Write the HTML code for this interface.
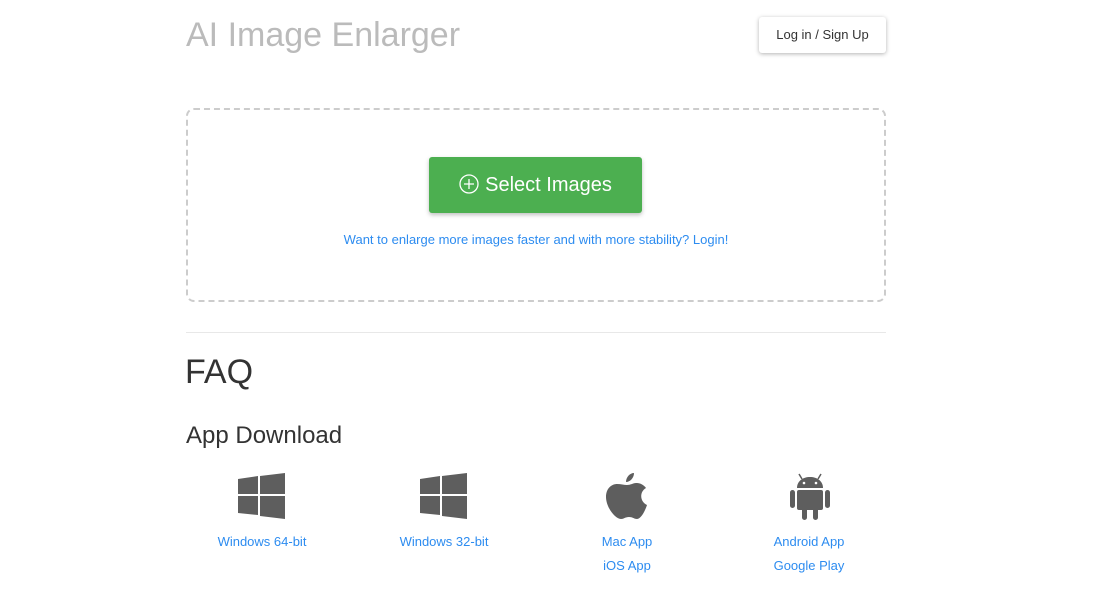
<!DOCTYPE html>
<html><head><style>
body{margin:0;background:#fff;font-family:"Liberation Sans",sans-serif;width:1101px;height:589px;overflow:hidden;position:relative}
.a{position:absolute}
.lnk{color:#2d8cf0;font-size:13px;text-align:center;width:180px;line-height:24px}
</style></head><body>
<div class="a" style="left:186px;top:16px;font-size:34px;color:#bbb;">AI Image Enlarger</div>
<div class="a" style="left:759px;top:17px;width:127px;height:36px;box-shadow:0 1px 4px rgba(0,0,0,.3);border-radius:3px;font-size:13px;color:#333;line-height:36px;text-align:center">Log in / Sign Up</div>
<div class="a" style="left:186px;top:108px;width:696px;height:190px;border:2px dashed #ccc;border-radius:8px"></div>
<div class="a" style="left:429px;top:157px;width:213px;height:56px;background:#4caf50;border-radius:3px;box-shadow:0 2px 4px rgba(0,0,0,.25);color:#fff;font-size:20px;line-height:56px;text-align:center">
<svg width="20" height="20" viewBox="0 0 20 20" style="vertical-align:-3px;margin-right:6px"><circle cx="10" cy="10" r="9" fill="none" stroke="#fff" stroke-width="1.3"/><path d="M10 5v10M5 10h10" stroke="#fff" stroke-width="1.3"/></svg>Select Images</div>
<div class="a lnk" style="left:186px;top:228px;width:700px">Want to enlarge more images faster and with more stability? Login!</div>
<div class="a" style="left:186px;top:332px;width:700px;height:1px;background:#e8e8e8"></div>
<div class="a" style="left:185px;top:353px;font-size:34px;color:#333">FAQ</div>
<div class="a" style="left:186px;top:422px;font-size:24px;color:#333">App Download</div>
<svg class="a" style="left:238px;top:473px" width="48" height="46" viewBox="0 0 48 46"><path d="M0 6l20-3v18H0zM22 3l25-3v21H22zM0 23h20v19L0 40zM22 23h25v23l-25-3z" fill="#5e5e5e"/></svg>
<svg class="a" style="left:420px;top:473px" width="48" height="46" viewBox="0 0 48 46"><path d="M0 6l20-3v18H0zM22 3l25-3v21H22zM0 23h20v19L0 40zM22 23h25v23l-25-3z" fill="#5e5e5e"/></svg>
<svg class="a" style="left:606px;top:473px" width="42" height="47" viewBox="0 0 42 47"><path d="M28 0c0 5-4 9-8 9 0-5 4-9 8-9zM21 12c4 0 6-2 10-2 3 0 7 2 9 5-7 4-6 14 1 17-2 6-6 14-10 14-3 0-4-2-8-2s-5 2-8 2C9 46 0 34 0 24 0 15 6 11 11 11c4 0 7 1 10 1z" fill="#5e5e5e"/></svg>
<svg class="a" style="left:789px;top:473px" width="42" height="47" viewBox="0 0 42 47"><path d="M10 1l3 5M32 1l-3 5" stroke="#5e5e5e" stroke-width="1.5"/><path d="M8 15C8 8 14 4 21 4s13 4 13 11z" fill="#5e5e5e"/><circle cx="15" cy="10" r="1.3" fill="#fff"/><circle cx="27" cy="10" r="1.3" fill="#fff"/><rect x="8" y="17" width="26" height="20" rx="2" fill="#5e5e5e"/><rect x="1" y="17" width="5" height="18" rx="2.5" fill="#5e5e5e"/><rect x="36" y="17" width="5" height="18" rx="2.5" fill="#5e5e5e"/><rect x="13" y="33" width="5" height="14" rx="2.5" fill="#5e5e5e"/><rect x="24" y="33" width="5" height="14" rx="2.5" fill="#5e5e5e"/></svg>
<div class="a lnk" style="left:172px;top:530px">Windows 64-bit</div>
<div class="a lnk" style="left:354px;top:530px">Windows 32-bit</div>
<div class="a lnk" style="left:537px;top:530px">Mac App<br>iOS App</div>
<div class="a lnk" style="left:719px;top:530px">Android App<br>Google Play</div>
</body></html>
